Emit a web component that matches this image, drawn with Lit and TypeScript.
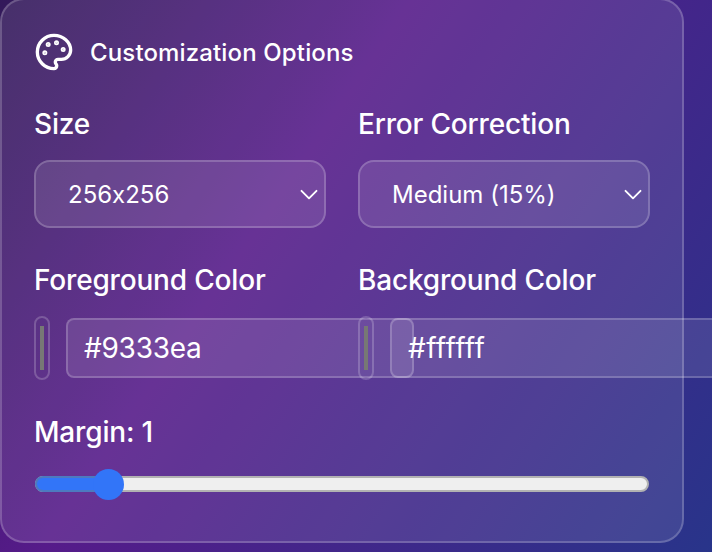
import { LitElement, html, css } from "lit";
import { customElement, property } from "lit/decorators.js";

@customElement("select-box")
class SelectBox extends LitElement {
  @property() value = "";
  static styles = css`
    :host { display: block; }
    .box {
      box-sizing: border-box; height: 68px; display: flex; align-items: center;
      justify-content: space-between; padding: 0 6px 0 32px;
      border: 2px solid rgba(255, 255, 255, 0.2); border-radius: 16px;
      background: rgba(255, 255, 255, 0.1); color: #fff;
      font: 400 24px/32px Inter, sans-serif; font-feature-settings: "calt" 0;
    }
    .value { padding-top: 2px; }
    svg { display: block; margin-top: 1px; }
  `;
  render() {
    return html`<div class="box">
      <span class="value">${this.value}</span>
      <svg width="18" height="12" viewBox="0 0 18 12" fill="none" stroke="#fff" stroke-width="1.9" stroke-linecap="round" stroke-linejoin="round"><path d="M1.5 1.8 9 9.3l7.5-7.5" /></svg>
    </div>`;
  }
}

@customElement("color-field")
class ColorField extends LitElement {
  @property() value = "";
  static styles = css`
    :host { display: flex; align-items: center; gap: 16px; height: 64px; }
    .well {
      box-sizing: border-box; flex: none; width: 16px; height: 64px; padding: 8px 4px;
      border: 2px solid rgba(255, 255, 255, 0.2); border-radius: 8px;
    }
    .swatch { height: 44px; background: #777875; }
    .text {
      box-sizing: border-box; flex: none; width: 348px; height: 60px; padding: 0 16px;
      border: 2px solid rgba(255, 255, 255, 0.2); border-radius: 8px;
      background: rgba(255, 255, 255, 0.1); color: #fff;
      font: 400 28px/56px Inter, sans-serif;
    }
    .hex { letter-spacing: var(--hex-spacing, 0); }
  `;
  render() {
    return html`<div class="well"><div class="swatch"></div></div>
      <div class="text"><span class="hex">${this.value}</span></div>`;
  }
}

@customElement("range-slider")
class RangeSlider extends LitElement {
  @property({ type: Number }) percent = 0;
  static styles = css`
    :host { display: flex; align-items: center; height: 32px; padding: 0 1px; }
    .track {
      box-sizing: border-box; flex: 1; height: 16px; position: relative;
      border: 2px solid #b2b2b2; border-radius: 8px; background: #efefef;
    }
    .fill {
      box-sizing: border-box; position: absolute; left: -2px; top: -2px; height: 16px;
      border: 2px solid #4d7abf; border-right: 0; border-radius: 8px 0 0 8px; background: #3275f8;
    }
    .thumb {
      position: absolute; top: -9.5px; width: 31px; height: 31px; margin-left: -17.5px;
      border-radius: 50%; background: #3275f8;
    }
  `;
  render() {
    return html`<div class="track">
      <div class="fill" style="width:${this.percent}%"></div>
      <div class="thumb" style="left:${this.percent}%"></div>
    </div>`;
  }
}

@customElement("app-root")
class AppRoot extends LitElement {
  static styles = css`
    :host {
      display: block; width: 712px; height: 552px; overflow: hidden;
      background: linear-gradient(124deg, #0f172a -338px, #561b8a 342px, #1e3a8a 1022px);
      color: #fff; font-family: Inter, sans-serif;
    }
    .page { display: flow-root; height: 100%; }
    .card {
      box-sizing: border-box; width: 684px; height: 545px; margin-top: -2px; padding: 32px;
      border: 2px solid rgba(255, 255, 255, 0.2); border-radius: 24px;
      background: rgba(255, 255, 255, 0.1);
      display: flex; flex-direction: column; gap: 32px;
    }
    .head { display: flex; align-items: center; gap: 16px; height: 40px; }
    .head svg { display: block; }
    .title { font-size: 24px; line-height: 32px; font-weight: 500; padding-top: 2px; letter-spacing: 0.14px; }
    .grid { display: grid; grid-template-columns: 292px 292px; gap: 32px; }
    .field { display: flex; flex-direction: column; gap: 16px; min-width: 0; }
    .label {
      font-size: 28px; line-height: 40px; font-weight: 500;
      white-space: nowrap; letter-spacing: -0.18px;
    }
    .light { --hex-spacing: 0.4px; }
    .dark { --hex-spacing: -0.25px; }
  `;
  render() {
    return html`<div class="page"><div class="card">
      <div class="head">
        <svg width="40" height="40" viewBox="0 0 24 24" fill="none" stroke="#fff" stroke-width="2" stroke-linecap="round" stroke-linejoin="round">
          <circle cx="13.5" cy="6.5" r=".5" fill="#fff" /><circle cx="17.5" cy="10.5" r=".5" fill="#fff" />
          <circle cx="8.5" cy="7.5" r=".5" fill="#fff" /><circle cx="6.5" cy="12.5" r=".5" fill="#fff" />
          <path d="M12 2C6.5 2 2 6.5 2 12s4.5 10 10 10c.926 0 1.648-.746 1.648-1.688 0-.437-.18-.835-.437-1.125-.29-.289-.438-.652-.438-1.125a1.64 1.64 0 0 1 1.668-1.668h1.996c3.051 0 5.555-2.503 5.555-5.554C21.965 6.012 17.461 2 12 2z" />
        </svg>
        <span class="title">Customization Options</span>
      </div>
      <div class="grid">
        <div class="field"><span class="label">Size</span><select-box value="256x256"></select-box></div>
        <div class="field"><span class="label">Error Correction</span><select-box value="Medium (15%)"></select-box></div>
        <div class="field"><span class="label">Foreground Color</span><color-field class="dark" value="#9333ea"></color-field></div>
        <div class="field"><span class="label">Background Color</span><color-field class="light" value="#ffffff"></color-field></div>
      </div>
      <div class="field">
        <span class="label">Margin: 1</span>
        <range-slider percent="12"></range-slider>
      </div>
    </div></div>`;
  }
}
